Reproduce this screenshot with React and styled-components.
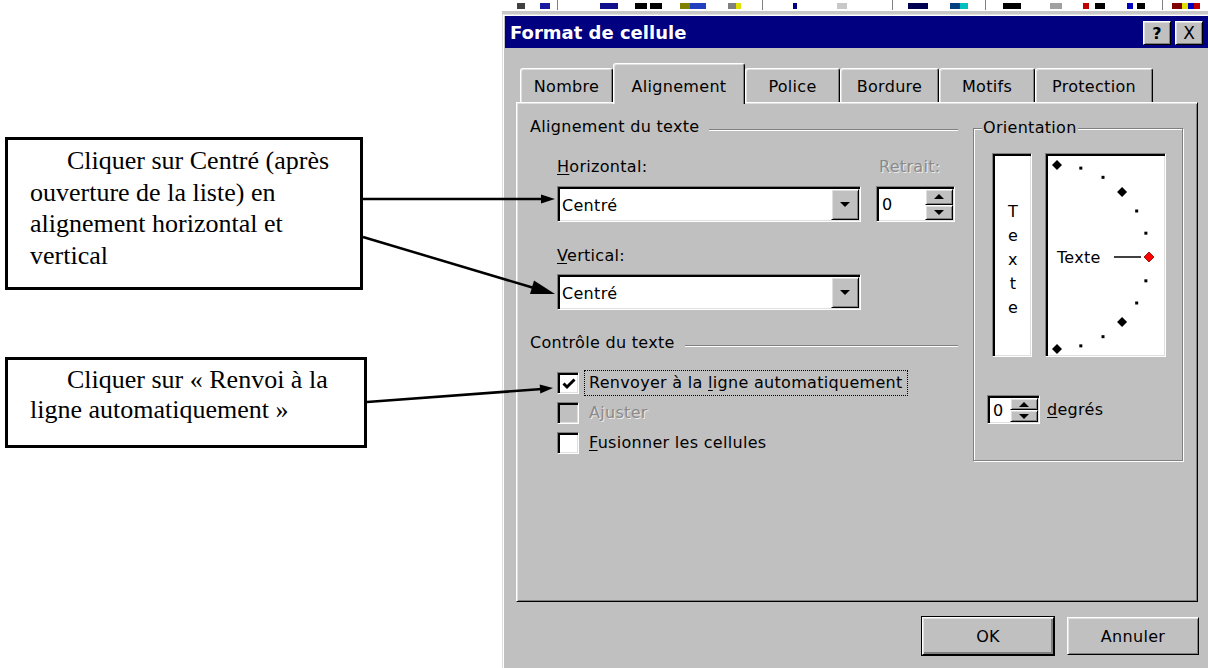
import React from "react";
import styled, { createGlobalStyle, css } from "styled-components";

const GlobalStyle = createGlobalStyle`
  html, body {
    margin: 0;
    padding: 0;
    background: #fff;
  }
  body {
    overflow: hidden;
  }
`;

const UI_FONT = `"DejaVu Sans", "Liberation Sans", sans-serif`;

// classic 3d bevels
const raised = css`
  border: 1px solid;
  border-color: #fff #000 #000 #fff;
  box-shadow: inset 1px 1px 0 #dfdfdf, inset -1px -1px 0 #808080;
`;

const sunken = css`
  border: 1px solid;
  border-color: #808080 #fff #fff #808080;
  box-shadow: inset 2px 2px 0 #000, inset -1px -1px 0 #dfdfdf;
`;

const TOOL_BITS = [
  [15, 8, "#404040"], [38, 10, "#1a1aa0"], [98, 18, "#10108a"], [133, 12, "#000"],
  [148, 12, "#000"], [178, 10, "#808000"], [188, 16, "#2040c0"], [226, 8, "#808080"],
  [234, 5, "#e0e000"], [291, 4, "#000080"], [335, 10, "#c8c8c8"], [406, 20, "#000050"],
  [448, 10, "#004080"], [458, 8, "#00c0c0"], [501, 18, "#000"], [548, 12, "#a0a0a0"],
  [581, 6, "#c00000"], [593, 10, "#000"], [625, 6, "#0000c0"], [635, 8, "#000"],
  [670, 10, "#800000"], [680, 6, "#e0e000"], [686, 6, "#0000c0"], [692, 6, "#c00000"],
];
const TOOL_SEPS = [55, 260, 390, 483, 660];

const WRAP_NOTE = "Cliquer sur «\u00a0Renvoi à la ligne automatiquement\u00a0»";

function Notes() {
  return (
    <NoteColumn>
      <Note $gap={137} $w={358} $h={153} $lh={31.5} $top={5}>
        Cliquer sur Centré (après ouverture de la liste) en alignement horizontal et vertical
      </Note>
      <Note $gap={67} $w={362} $h={91} $lh={30} $top={5}>
        {WRAP_NOTE}
      </Note>
    </NoteColumn>
  );
}

function Dial() {
  const cx = 11;
  const cy = 103;
  const r = 92;
  const marks = [90, 75, 60, 45, 30, 15, 0, -15, -30, -45, -60, -75, -90];
  return (
    <svg width="119" height="202" viewBox="0 0 119 202">
      {marks.map((a) => {
        const rad = (a * Math.PI) / 180;
        const x = cx + r * Math.cos(rad);
        const y = cy - r * Math.sin(rad);
        if (a % 45 === 0) {
          const s = 5;
          const red = a === 0;
          return (
            <polygon
              key={a}
              points={`${x},${y - s} ${x + s},${y} ${x},${y + s} ${x - s},${y}`}
              fill={red ? "#ff0000" : "#000"}
              stroke={red ? "#800000" : "none"}
              strokeWidth="0.8"
            />
          );
        }
        return <rect key={a} x={x - 1.5} y={y - 1.5} width="3" height="3" fill="#000" />;
      })}
      <text x={cx} y={cy + 6} fontFamily="DejaVu Sans, sans-serif" fontSize="16" fill="#000">
        Texte
      </text>
      <line x1="68" y1={cy} x2="95" y2={cy} stroke="#000" strokeWidth="1.5" />
    </svg>
  );
}

function Combo({ value }) {
  return (
    <ComboBox>
      <span>{value}</span>
      <DropButton>
        <Triangle />
      </DropButton>
    </ComboBox>
  );
}

function Spinner({ value, width }) {
  return (
    <SpinBox $w={width}>
      <span>{value}</span>
      <SpinButtons>
        <SpinButton>
          <Triangle $up />
        </SpinButton>
        <SpinButton>
          <Triangle />
        </SpinButton>
      </SpinButtons>
    </SpinBox>
  );
}

function Check({ checked, disabled, focused, children }) {
  return (
    <CheckRow $disabled={disabled}>
      <CheckBox $disabled={disabled}>
        {checked && (
          <svg width="16" height="16" viewBox="0 0 16 16">
            <path d="M2.5 7.5 L6 11 L13.5 3.5" stroke="#000" strokeWidth="3" fill="none" />
          </svg>
        )}
      </CheckBox>
      <CheckLabel $focused={focused}>{children}</CheckLabel>
    </CheckRow>
  );
}

export default function App() {
  return (
    <>
      <GlobalStyle />
      <Page>
        <Notes />
        <Window>
          <ToolStrip width="706" height="14" viewBox="0 0 706 14">
            {TOOL_BITS.map(([x, w, c], i) => (
              <rect key={i} x={x} y={3} width={w} height={6} fill={c} />
            ))}
            {TOOL_SEPS.map((x) => (
              <rect key={x} x={x} y={0} width={1} height={10} fill="#808080" />
            ))}
            <rect x="0" y="11" width="706" height="3" fill="#c8c8c8" />
          </ToolStrip>
          <Frame>
            <TitleBar>
              <Title>Format de cellule</Title>
              <TitleButtons>
                <TitleButton>?</TitleButton>
                <TitleButton $thin>X</TitleButton>
              </TitleButtons>
            </TitleBar>
            <Body>
              <TabRow>
                <Tab $w={93}>Nombre</Tab>
                <Tab $w={132} $active>Alignement</Tab>
                <Tab $w={95}>Police</Tab>
                <Tab $w={99}>Bordure</Tab>
                <Tab $w={96}>Motifs</Tab>
                <Tab $w={118}>Protection</Tab>
              </TabRow>
              <Sheet>
                <LeftColumn>
                  <SectionTitle>Alignement du texte</SectionTitle>
                  <FieldGrid>
                    <FieldLabel>
                      <Key>H</Key>orizontal:
                    </FieldLabel>
                    <FieldLabel $disabled $indent={3}>Retrait:</FieldLabel>
                    <Combo value="Centré" />
                    <Spinner value="0" width={79} />
                  </FieldGrid>
                  <FieldBlock>
                    <FieldLabel>
                      <Key>V</Key>ertical:
                    </FieldLabel>
                    <Combo value="Centré" />
                  </FieldBlock>
                  <SectionTitle $gap={24}>Contrôle du texte</SectionTitle>
                  <CheckList>
                    <Check checked focused>
                      Renvoyer à la <Key>l</Key>igne automatiquement
                    </Check>
                    <Check disabled>Ajuster</Check>
                    <Check>
                      <Key>F</Key>usionner les cellules
                    </Check>
                  </CheckList>
                </LeftColumn>
                <Group>
                  <GroupLegend>Orientation</GroupLegend>
                  <DialRow>
                    <StackBox>
                      {"Texte".split("").map((ch, i) => (
                        <span key={i}>{ch}</span>
                      ))}
                    </StackBox>
                    <DialBox>
                      <Dial />
                    </DialBox>
                  </DialRow>
                  <DegreeRow>
                    <Spinner value="0" width={53} />
                    <span>
                      <Key>d</Key>egrés
                    </span>
                  </DegreeRow>
                </Group>
              </Sheet>
              <ButtonRow>
                <PushButton $default>OK</PushButton>
                <PushButton>Annuler</PushButton>
              </ButtonRow>
            </Body>
          </Frame>
        </Window>
        <Arrows width="1208" height="668" viewBox="0 0 1208 668">
          <line x1="363" y1="199" x2="543" y2="199" stroke="#000" strokeWidth="2.5" />
          <polygon points="555,199 541,194.5 541,203.5" fill="#000" />
          <line x1="363" y1="237" x2="534" y2="288" stroke="#000" strokeWidth="2.5" />
          <polygon points="555,294 530,293.9 534,280.5" fill="#000" />
          <line x1="367" y1="402" x2="542" y2="389" stroke="#000" strokeWidth="2.5" />
          <polygon points="553,388 540.3,393.5 539.7,384.5" fill="#000" />
        </Arrows>
      </Page>
    </>
  );
}

// styled-components
const Page = styled.div`
  position: relative;
  width: 1208px;
  height: 668px;
  display: flex;
  overflow: hidden;
`;

const NoteColumn = styled.div`
  width: 502px;
  flex-shrink: 0;
  padding-left: 5px;
  box-sizing: border-box;
  display: flex;
  flex-direction: column;
  align-items: flex-start;
`;

const Note = styled.div`
  margin-top: ${(p) => p.$gap}px;
  width: ${(p) => p.$w}px;
  height: ${(p) => p.$h}px;
  box-sizing: border-box;
  border: 3px solid #000;
  padding: ${(p) => p.$top}px 10px 0 22px;
  font-family: "Liberation Serif", "Times New Roman", serif;
  font-size: 26px;
  line-height: ${(p) => p.$lh}px;
  text-indent: 37px;
  color: #000;
`;

const Window = styled.div`
  width: 706px;
  height: 668px;
  flex-shrink: 0;
  display: flex;
  flex-direction: column;
  font-family: ${UI_FONT};
  font-size: 16px;
  letter-spacing: 0.3px;
  color: #000;
`;

const ToolStrip = styled.svg`
  display: block;
  flex-shrink: 0;
`;

const Frame = styled.div`
  flex: 1;
  background: #c0c0c0;
  border-top: 1px solid #dfdfdf;
  border-left: 1px solid #dfdfdf;
  box-shadow: inset 1px 1px 0 #fff;
  padding: 1px 0 0 2px;
  display: flex;
  flex-direction: column;
`;

const TitleBar = styled.div`
  height: 32px;
  flex-shrink: 0;
  background: #000080;
  display: flex;
  align-items: center;
  padding: 0 5px;
`;

const Title = styled.div`
  flex: 1;
  color: #fff;
  font-weight: bold;
  font-size: 18px;
  letter-spacing: 0;
`;

const TitleButtons = styled.div`
  display: flex;
  gap: 4px;
  margin-top: 2px;
`;

const TitleButton = styled.div`
  ${raised};
  width: 28px;
  height: 24px;
  box-sizing: border-box;
  background: #c0c0c0;
  display: flex;
  align-items: center;
  justify-content: center;
  font-size: ${(p) => (p.$thin ? 17 : 16)}px;
  font-weight: ${(p) => (p.$thin ? "normal" : "bold")};
  letter-spacing: 0;
`;

const Body = styled.div`
  flex: 1;
  padding: 15px 9px 0 11px;
  display: flex;
  flex-direction: column;
`;

const TabRow = styled.div`
  display: flex;
  align-items: flex-end;
  height: 39px;
  margin-left: 4px;
  position: relative;
  z-index: 1;
`;

const Tab = styled.div`
  width: ${(p) => p.$w}px;
  height: ${(p) => (p.$active ? 41 : 34)}px;
  margin-bottom: ${(p) => (p.$active ? -2 : 0)}px;
  padding-top: ${(p) => (p.$active ? 4 : 2)}px;
  box-sizing: border-box;
  flex-shrink: 0;
  background: #c0c0c0;
  border: 1px solid;
  border-bottom: none;
  border-color: #fff #000 transparent #fff;
  border-radius: 3px 3px 0 0;
  box-shadow: inset 1px 1px 0 #dfdfdf, inset -1px 0 0 #808080;
  display: flex;
  align-items: center;
  justify-content: center;
  position: relative;
  z-index: ${(p) => (p.$active ? 2 : 0)};
`;

const Sheet = styled.div`
  ${raised};
  width: 682px;
  height: 500px;
  box-sizing: border-box;
  flex-shrink: 0;
  padding: 15px 0 0 13px;
  display: grid;
  grid-template-columns: 428px 210px;
  column-gap: 15px;
  align-items: start;
`;

const LeftColumn = styled.div`
  display: flex;
  flex-direction: column;
`;

const SectionTitle = styled.div`
  display: flex;
  align-items: center;
  height: 18px;
  line-height: 18px;
  margin-top: ${(p) => p.$gap || 0}px;

  &::after {
    content: "";
    flex: 1;
    margin: 5px 0 0 10px;
    border-top: 1px solid #808080;
    border-bottom: 1px solid #fff;
  }
`;

const FieldGrid = styled.div`
  margin: 22px 0 0 27px;
  display: grid;
  grid-template-columns: 304px 79px;
  column-gap: 15px;
  row-gap: 10px;
`;

const FieldBlock = styled.div`
  margin: 25px 0 0 27px;
  width: 304px;
  display: flex;
  flex-direction: column;
  gap: 9px;
`;

const FieldLabel = styled.div`
  height: 18px;
  line-height: 18px;
  padding-left: ${(p) => p.$indent || 0}px;
  color: ${(p) => (p.$disabled ? "#8a8a8a" : "#000")};
  text-shadow: ${(p) => (p.$disabled ? "1px 1px 0 #ececec" : "none")};
`;

const Key = styled.span`
  text-decoration: underline;
  text-underline-offset: 2px;
`;

const ComboBox = styled.div`
  ${sunken};
  height: 36px;
  box-sizing: border-box;
  background: #fff;
  display: flex;
  align-items: center;
  padding: 2px 1px 0 4px;

  span {
    flex: 1;
  }
`;

const DropButton = styled.div`
  ${raised};
  width: 28px;
  height: 31px;
  box-sizing: border-box;
  background: #c0c0c0;
  display: flex;
  align-items: center;
  justify-content: center;
  margin-top: -1px;
`;

const Triangle = styled.div`
  width: 0;
  height: 0;
  border-left: 5px solid transparent;
  border-right: 5px solid transparent;
  ${(p) => (p.$up ? "border-bottom: 5px solid #000;" : "border-top: 5px solid #000;")}
`;

const SpinBox = styled.div`
  ${sunken};
  width: ${(p) => p.$w}px;
  height: 36px;
  box-sizing: border-box;
  background: #fff;
  display: flex;
  align-items: center;
  padding: 2px 1px 1px 5px;

  span {
    flex: 1;
  }
`;

const SpinButtons = styled.div`
  width: 28px;
  height: 100%;
  display: flex;
  flex-direction: column;
`;

const SpinButton = styled.div`
  ${raised};
  flex: 1;
  box-sizing: border-box;
  background: #c0c0c0;
  display: flex;
  align-items: center;
  justify-content: center;
`;

const CheckList = styled.div`
  margin: 18px 0 0 27px;
  display: flex;
  flex-direction: column;
  gap: 4px;
`;

const CheckRow = styled.div`
  display: flex;
  align-items: center;
  gap: 5px;
  color: ${(p) => (p.$disabled ? "#8a8a8a" : "#000")};
  text-shadow: ${(p) => (p.$disabled ? "1px 1px 0 #ececec" : "none")};
`;

const CheckBox = styled.div`
  ${sunken};
  width: 22px;
  height: 22px;
  box-sizing: border-box;
  background: ${(p) => (p.$disabled ? "#c0c0c0" : "#fff")};
  display: flex;
  align-items: center;
  justify-content: center;
  padding: 1px 0 0 1px;
`;

const CheckLabel = styled.div`
  padding: 3px 4px;
  line-height: 18px;
  border: 1px dotted ${(p) => (p.$focused ? "#000" : "transparent")};
`;

const Group = styled.div`
  position: relative;
  margin-top: 10px;
  height: 333px;
  box-sizing: border-box;
  border: 1px solid #808080;
  box-shadow: inset 1px 1px 0 #fff, 1px 1px 0 #fff;
  padding: 24px 0 0 18px;
`;

const GroupLegend = styled.span`
  position: absolute;
  top: -10px;
  left: 8px;
  padding: 0 1px;
  line-height: 18px;
  background: #c0c0c0;
`;

const DialRow = styled.div`
  display: flex;
  gap: 13px;
`;

const StackBox = styled.div`
  ${sunken};
  width: 40px;
  height: 204px;
  box-sizing: border-box;
  background: #fff;
  display: flex;
  flex-direction: column;
  align-items: center;
  justify-content: center;
  line-height: 24px;
  padding: 10px 0 0 2px;
`;

const DialBox = styled.div`
  ${sunken};
  width: 121px;
  height: 204px;
  box-sizing: border-box;
  background: #fff;
  overflow: hidden;

  svg {
    display: block;
  }
`;

const DegreeRow = styled.div`
  margin: 38px 0 0 -5px;
  display: flex;
  align-items: center;
  gap: 7px;

  ${SpinBox} {
    height: 29px;
  }
`;

const ButtonRow = styled.div`
  margin-top: 15px;
  display: flex;
  justify-content: flex-end;
  gap: 13px;
`;

const PushButton = styled.div`
  ${raised};
  width: 132px;
  height: 38px;
  box-sizing: border-box;
  background: #c0c0c0;
  display: flex;
  align-items: center;
  justify-content: center;
  ${(p) =>
    p.$default &&
    css`
      outline: 1px solid #000;
      outline-offset: 0;
      box-shadow: inset 1px 1px 0 #dfdfdf, inset -2px -2px 0 #808080;
    `}
`;

const Arrows = styled.svg`
  position: absolute;
  left: 0;
  top: 0;
  pointer-events: none;
`;
